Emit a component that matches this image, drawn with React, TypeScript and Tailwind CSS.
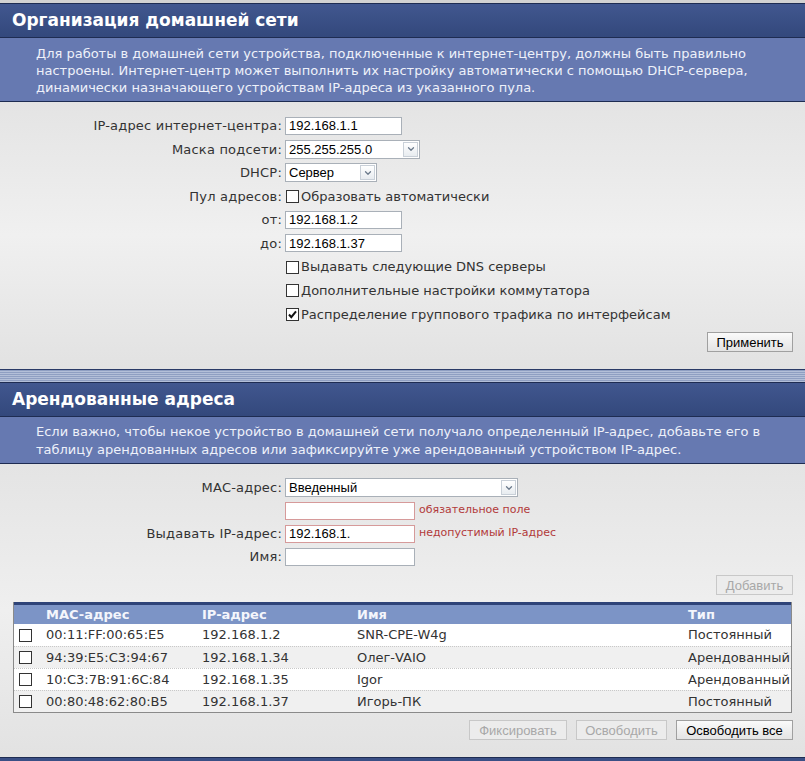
import { ChevronDown } from "lucide-react";

const leases = [
  { mac: "00:11:FF:00:65:E5", ip: "192.168.1.2", name: "SNR-CPE-W4g", type: "Постоянный" },
  { mac: "94:39:E5:C3:94:67", ip: "192.168.1.34", name: "Олег-VAIO", type: "Арендованный" },
  { mac: "10:C3:7B:91:6C:84", ip: "192.168.1.35", name: "Igor", type: "Арендованный" },
  { mac: "00:80:48:62:80:B5", ip: "192.168.1.37", name: "Игорь-ПК", type: "Постоянный" },
];

function Checkbox({ checked = false }: { checked?: boolean }) {
  return (
    <span className="inline-flex h-[13px] w-[13px] shrink-0 items-center justify-center border border-[#333] bg-white">
      {checked && (
        <svg width="11" height="11" viewBox="0 0 11 11">
          <path d="M2 5.5 L4.3 8.2 L9 2.3" fill="none" stroke="#111" strokeWidth="2" />
        </svg>
      )}
    </span>
  );
}

function TextInput({ value = "", error = false, w = "w-[117px]" }: { value?: string; error?: boolean; w?: string }) {
  return (
    <div
      className={`${w} flex h-[18px] items-center border bg-white px-[3px] font-['Liberation_Sans',Arial,sans-serif] text-[13px] text-black ${
        error ? "border-[#d69a9a]" : "border-[#a9b0b8]"
      }`}
    >
      {value}
    </div>
  );
}

function Select({ value, w }: { value: string; w: string }) {
  return (
    <div className={`${w} flex h-[19px] items-center border border-[#a9b0b8] bg-white pl-[3px] pr-[1px]`}>
      <span className="flex-1 font-['Liberation_Sans',Arial,sans-serif] text-[13px] text-black">{value}</span>
      <span className="flex h-[15px] w-[15px] items-center justify-center border border-[#c9d0d8] bg-gradient-to-b from-white to-[#e8ecf0]">
        <ChevronDown size={10} strokeWidth={3} color="#6b7a8c" />
      </span>
    </div>
  );
}

function Button({ label, disabled = false, w }: { label: string; disabled?: boolean; w: string }) {
  return (
    <button
      className={`${w} h-[20px] border font-['Liberation_Sans',Arial,sans-serif] text-[13px] ${
        disabled
          ? "border-[#c8c8c8] bg-[#ececec] text-[#a8a8a8]"
          : "border-[#a0a0a0] bg-gradient-to-b from-[#fafafa] to-[#e4e4e4] text-black"
      }`}
    >
      {label}
    </button>
  );
}

function Row({ label, children, h = "h-[23.5px]" }: { label?: string; children: React.ReactNode; h?: string }) {
  return (
    <div className={`flex ${h} items-center`}>
      <div className="w-[285px] pr-[3px] text-right tracking-[0.2px]">{label}</div>
      <div className="flex items-center">{children}</div>
    </div>
  );
}

function Header({ title }: { title: string }) {
  return (
    <div className="flex h-[35px] items-center border-y border-[#1e2c52] bg-gradient-to-b from-[#41578f] to-[#33487c] px-3 text-[17px] font-bold text-white">
      {title}
    </div>
  );
}

export default function App() {
  return (
    <div className="w-[805px] bg-[#e8e8e8] font-['DejaVu_Sans',Verdana,sans-serif] text-[13px] text-[#333]">
      {/* section 1 */}
      <div className="h-[3px] bg-[#d2d2d2]" />
      <Header title="Организация домашней сети" />
      <div className="border-b border-[#1e2c52] bg-[#6679b1] pb-[5px] pl-[36px] pr-3 pt-[7px] leading-[17px] text-[#eef1fa]">
        Для работы в домашней сети устройства, подключенные к интернет-центру, должны быть правильно
        настроены. Интернет-центр может выполнить их настройку автоматически с помощью DHCP-сервера,
        динамически назначающего устройствам IP-адреса из указанного пула.
      </div>
      <div className="bg-gradient-to-b from-[#e4e4e4] via-[#f0f0f0] to-[#e2e2e2] pb-[17px] pt-[12px]">
        <Row label="IP-адрес интернет-центра:">
          <TextInput value="192.168.1.1" />
        </Row>
        <Row label="Маска подсети:">
          <Select value="255.255.255.0" w="w-[135px]" />
        </Row>
        <Row label="DHCP:">
          <Select value="Сервер" w="w-[92px]" />
        </Row>
        <Row label="Пул адресов:">
          <span className="ml-[1px] flex items-center gap-[2px]">
            <Checkbox />
            Образовать автоматически
          </span>
        </Row>
        <Row label="от:">
          <TextInput value="192.168.1.2" />
        </Row>
        <Row label="до:">
          <TextInput value="192.168.1.37" />
        </Row>
        <Row h="h-[24px]">
          <span className="ml-[1px] flex items-center gap-[2px]">
            <Checkbox />
            Выдавать следующие DNS серверы
          </span>
        </Row>
        <Row>
          <span className="ml-[1px] flex items-center gap-[2px]">
            <Checkbox />
            Дополнительные настройки коммутатора
          </span>
        </Row>
        <Row>
          <span className="ml-[1px] flex items-center gap-[2px]">
            <Checkbox checked />
            Распределение группового трафика по интерфейсам
          </span>
        </Row>
        <div className="mt-[6px] flex justify-end pr-[12px]">
          <Button label="Применить" w="w-[86px]" />
        </div>
      </div>

      {/* section 2 */}
      <div className="h-[13px] border-t border-[#2a3a66] bg-[repeating-linear-gradient(to_bottom,#8f9fc2_0px,#8f9fc2_1px,#b3bfd8_1px,#b3bfd8_2px)]" />
      <Header title="Арендованные адреса" />
      <div className="border-b border-[#1e2c52] bg-[#6679b1] pb-[4px] pl-[36px] pr-3 pt-[6px] leading-[18px] text-[#eef1fa]">
        Если важно, чтобы некое устройство в домашней сети получало определенный IP-адрес, добавьте его в
        таблицу арендованных адресов или зафиксируйте уже арендованный устройством IP-адрес.
      </div>
      <div className="bg-gradient-to-b from-[#e4e4e4] via-[#efefef] to-[#e2e2e2] pb-[17px] pt-[12px]">
        <Row label="MAC-адрес:" h="h-[23px]">
          <Select value="Введенный" w="w-[233px]" />
        </Row>
        <Row h="h-[23px]">
          <TextInput error w="w-[130px]" />
          <span className="ml-[4px] text-[11px] text-[#b23a3a]">обязательное поле</span>
        </Row>
        <Row label="Выдавать IP-адрес:" h="h-[23px]">
          <TextInput value="192.168.1." error w="w-[130px]" />
          <span className="ml-[4px] text-[11px] text-[#b23a3a]">недопустимый IP-адрес</span>
        </Row>
        <Row label="Имя:" h="h-[23px]">
          <TextInput w="w-[130px]" />
        </Row>
        <div className="mt-[7px] flex justify-end pr-[12px]">
          <Button label="Добавить" disabled w="w-[77px]" />
        </div>
        <div className="mx-[13px] mt-[7px] border border-t-0 border-[#8a8a8a] bg-white">
          <div className="flex h-[22px] items-center border-t-[3px] border-[#2e4378] bg-[#7c94c6] font-bold text-[#f4f6fc]">
            <div className="w-[32px]" />
            <div className="w-[156px]">MAC-адрес</div>
            <div className="w-[155px]">IP-адрес</div>
            <div className="w-[331px]">Имя</div>
            <div>Тип</div>
          </div>
          {leases.map((l, i) => (
            <div
              key={l.mac}
              className={`flex h-[22px] items-center border-[#c8c8c8] ${i > 0 ? "border-t border-dotted" : ""} ${
                i % 2 === 1 ? "bg-[#f0f0f0]" : "bg-white"
              }`}
            >
              <div className="flex w-[32px] pl-[5px]">
                <Checkbox />
              </div>
              <div className="w-[156px]">{l.mac}</div>
              <div className="w-[155px]">{l.ip}</div>
              <div className="w-[331px]">{l.name}</div>
              <div>{l.type}</div>
            </div>
          ))}
        </div>
        <div className="mt-[7px] flex justify-end gap-[9px] pr-[12px]">
          <Button label="Фиксировать" disabled w="w-[98px]" />
          <Button label="Освободить" disabled w="w-[91px]" />
          <Button label="Освободить все" w="w-[117px]" />
        </div>
      </div>
      <div className="h-[4px] border-t border-[#1e2c52] bg-[#3a4f85]" />
    </div>
  );
}
